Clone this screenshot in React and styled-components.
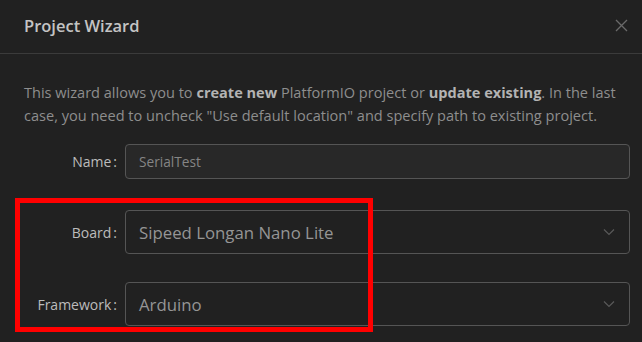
import React from "react";
import styled, { createGlobalStyle } from "styled-components";

const Global = createGlobalStyle`
  html, body { margin: 0; padding: 0; background: #212121; }
  body { font-family: "Open Sans", "Noto Sans", sans-serif; }
`;

const Dialog = styled.div`
  position: relative;
  width: 642px;
  height: 342px;
  overflow: hidden;
  background: #212121;
`;

const Header = styled.div`
  height: 53px;
  border-bottom: 1px solid #3b3b3b;
  display: flex;
  align-items: center;
  justify-content: space-between;
  padding: 0 10px 0 24px;
`;

const Title = styled.div`
  font-size: 16.5px;
  font-weight: 600;
  color: #c4c4c4;
  margin-top: -2px;
`;

const Close = styled.button`
  background: none;
  border: 0;
  padding: 0;
  width: 22px;
  height: 22px;
  display: flex;
  align-items: center;
  justify-content: center;
  margin-top: -2px;
`;

const Body = styled.div`
  padding: 27px 12px 0 24px;
`;

const Description = styled.p`
  margin: 0 0 17px;
  font-size: 14.55px;
  line-height: 23px;
  color: #8e8e8e;
  b { font-weight: 700; color: #b3b3b3; }
`;

const Form = styled.div`
  display: flex;
  flex-direction: column;
  margin-left: -24px;
`;

const Row = styled.div`
  display: grid;
  grid-template-columns: 125px 1fr;
  align-items: center;
  height: ${(p) => p.$h}px;
  margin-top: ${(p) => p.$mt || 0}px;
`;

const Label = styled.label`
  justify-self: end;
  font-size: 14px;
  color: #bcbcbc;
  &::after {
    content: ":";
    margin: 0 8px 0 2px;
  }
`;

const Input = styled.div`
  height: 100%;
  box-sizing: border-box;
  border: 1px solid #555;
  border-radius: 4px;
  background: #282828;
  display: flex;
  align-items: center;
  padding-left: 13px;
  font-size: 13.7px;
  color: #858585;
`;

const Select = styled(Input)`
  background: #212121;
  justify-content: space-between;
  padding-right: 14px;
  font-size: 16.8px;
  color: #959595;
`;

const Highlight = styled.div`
  position: absolute;
  left: 15px;
  top: 198px;
  width: 358px;
  height: 134px;
  box-sizing: border-box;
  border: 5px solid #ff0000;
  pointer-events: none;
`;

const Chevron = () => (
  <svg width="12" height="8" viewBox="0 0 12 8" fill="none">
    <path d="M1 1.5 L6 6.5 L11 1.5" stroke="#595959" strokeWidth="1.2" />
  </svg>
);

export default function App() {
  return (
    <Dialog>
      <Global />
      <Header>
        <Title>Project Wizard</Title>
        <Close aria-label="close">
          <svg width="13" height="13" viewBox="0 0 13 13">
            <path d="M1 1 L12 12 M12 1 L1 12" stroke="#6a6a6a" strokeWidth="1.3" />
          </svg>
        </Close>
      </Header>
      <Body>
        <Description>
          This wizard allows you to <b>create new</b> PlatformIO project or{" "}
          <b>update existing</b>. In the last case, you need to uncheck "Use
          default location" and specify path to existing project.
        </Description>
        <Form>
          <Row $h={35}>
            <Label>Name</Label>
            <Input>SerialTest</Input>
          </Row>
          <Row $h={44} $mt={31}>
            <Label>Board</Label>
            <Select>
              Sipeed Longan Nano Lite
              <Chevron />
            </Select>
          </Row>
          <Row $h={44} $mt={28}>
            <Label>Framework</Label>
            <Select>
              Arduino
              <Chevron />
            </Select>
          </Row>
        </Form>
      </Body>
      <Highlight />
    </Dialog>
  );
}
